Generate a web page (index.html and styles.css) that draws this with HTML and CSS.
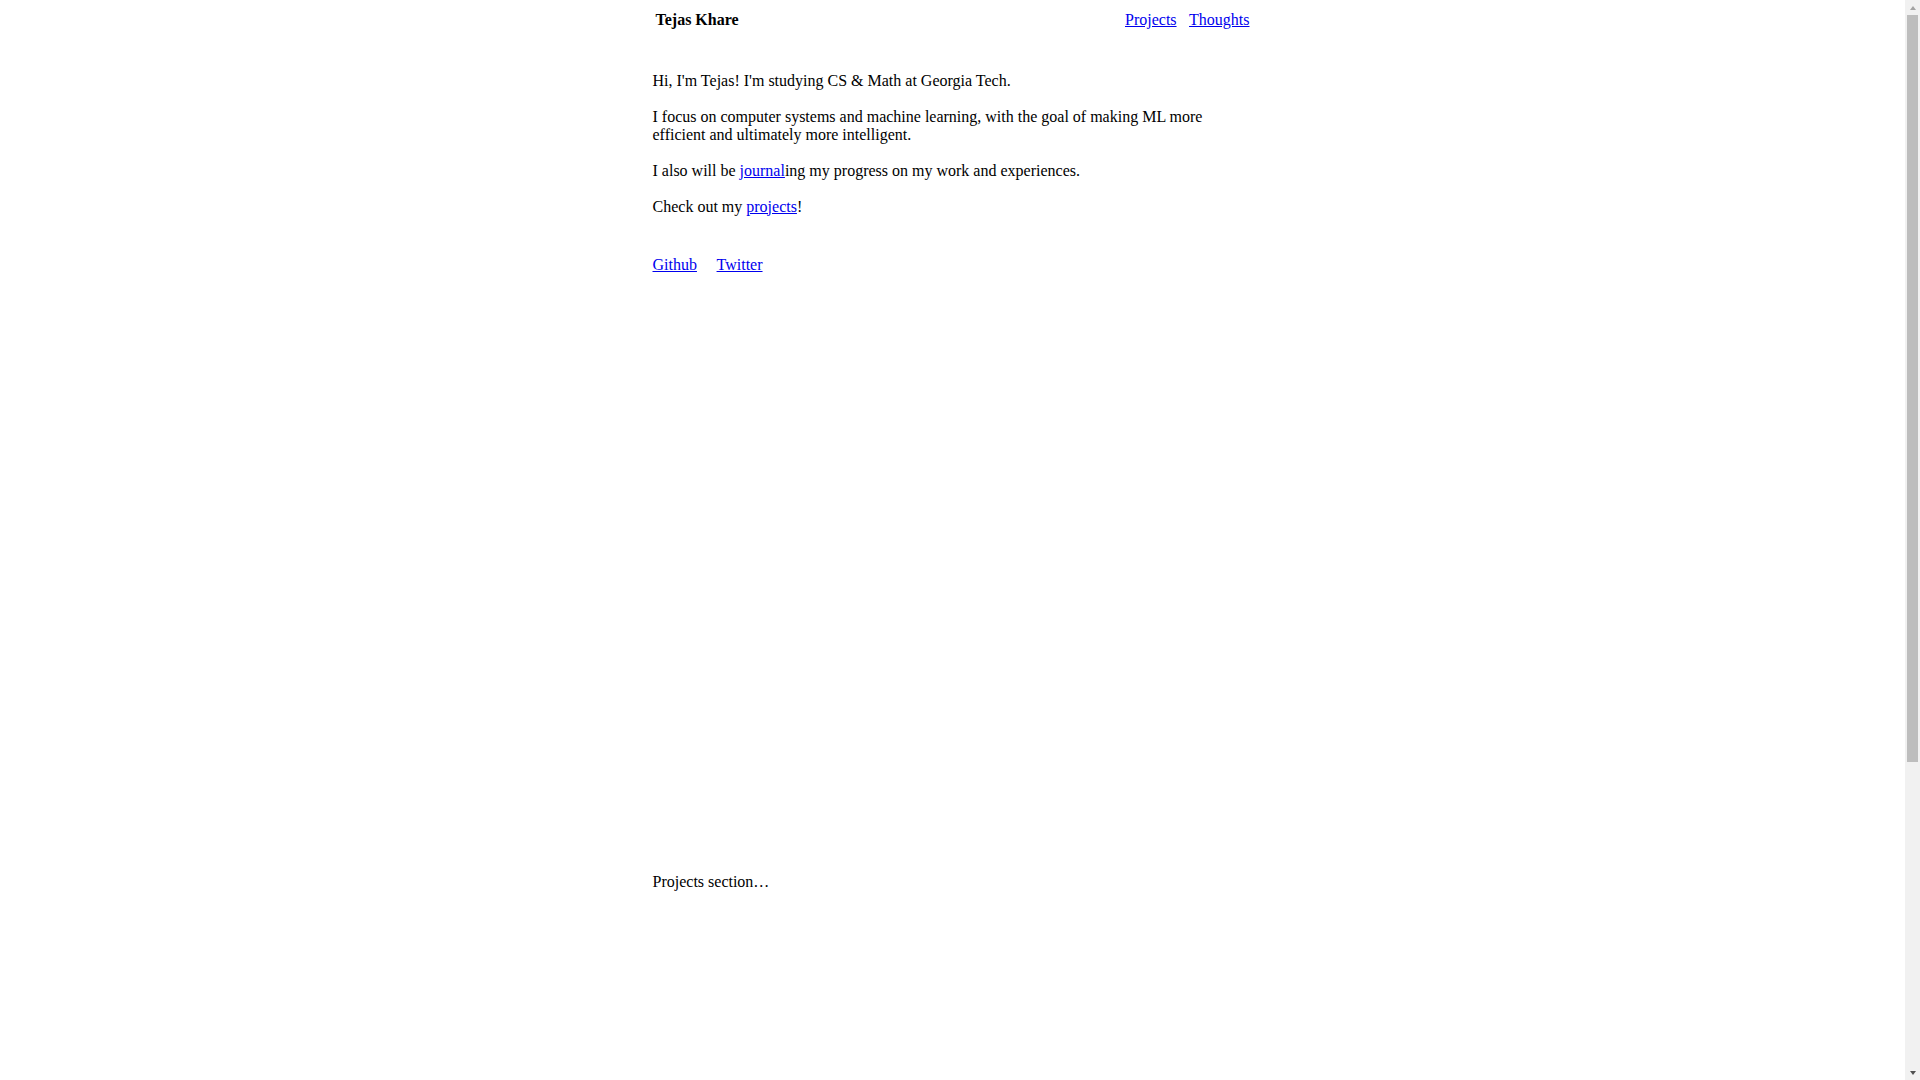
FILE: index.html
```html
<!DOCTYPE html>
<html lang="en">
<head>
<meta charset="utf-8">
<title>Tejas Khare</title>
<link rel="stylesheet" href="styles.css">
</head>
<body>
<div class="page">
  <header class="site-header">
    <span class="name">Tejas Khare</span>
    <nav class="nav">
      <a href="#projects">Projects</a>
      <a href="#thoughts">Thoughts</a>
    </nav>
  </header>
  <section class="hero">
    <p>Hi, I'm Tejas! I'm studying CS &amp; Math at Georgia Tech.</p>
    <p>I focus on computer systems and machine learning, with the goal of making ML more efficient and ultimately more intelligent.</p>
    <p>I also will be <a href="#thoughts">journal</a>ing my progress on my work and experiences.</p>
    <p>Check out my <a href="#projects">projects</a>!</p>
    <div class="socials">
      <a href="#">Github</a>
      <a href="#">Twitter</a>
    </div>
  </section>
  <section class="projects" id="projects">
    <p>Projects section…</p>
  </section>
</div>
<div class="scrollbar" aria-hidden="true">
  <div class="scroll-arrow up"></div>
  <div class="scroll-track">
    <div class="scroll-thumb"></div>
  </div>
  <div class="scroll-arrow down"></div>
</div>
</body>
</html>
```

FILE: styles.css
```css
html, body {
  margin: 0;
  padding: 0;
}

body {
  font-family: "Liberation Serif", "Times New Roman", serif;
  font-size: 16px;
  line-height: 18.2px;
  color: #000;
  background: #fff;
  padding-right: 15px;
}

a {
  color: #0000ee;
}

.page {
  width: 600px;
  margin: 0 auto;
  padding-top: 8px;
  min-height: 1512px;
}

.site-header {
  display: flex;
  justify-content: space-between;
  align-items: center;
  padding: 3px;
}

.name {
  font-weight: bold;
}

.nav {
  display: flex;
  gap: 12.5px;
}

.hero {
  padding-top: 39.8px;
}

.hero p {
  margin: 0 0 17.6px 0;
}

.socials {
  display: flex;
  gap: 19.6px;
  padding-top: 23px;
}

.projects {
  padding-top: 598.2px;
}

.projects p {
  margin: 0;
}

/* visual replica of the browser's vertical scrollbar */
.scrollbar {
  position: fixed;
  top: 0;
  right: 0;
  width: 15px;
  height: 100vh;
  background: #f1f1f1;
  display: flex;
  flex-direction: column;
}

.scroll-arrow {
  height: 15px;
  display: flex;
  align-items: center;
  justify-content: center;
}

.scroll-arrow::before {
  content: "";
  width: 0;
  height: 0;
  border-left: 3.5px solid transparent;
  border-right: 3.5px solid transparent;
}

.scroll-arrow.up::before {
  border-bottom: 4px solid #a3a3a3;
}

.scroll-arrow.down::before {
  border-top: 4px solid #505050;
}

.scroll-track {
  flex: 1;
  padding: 0 2px;
}

.scroll-thumb {
  height: 747px;
  background: #bdbdbd;
}
```
